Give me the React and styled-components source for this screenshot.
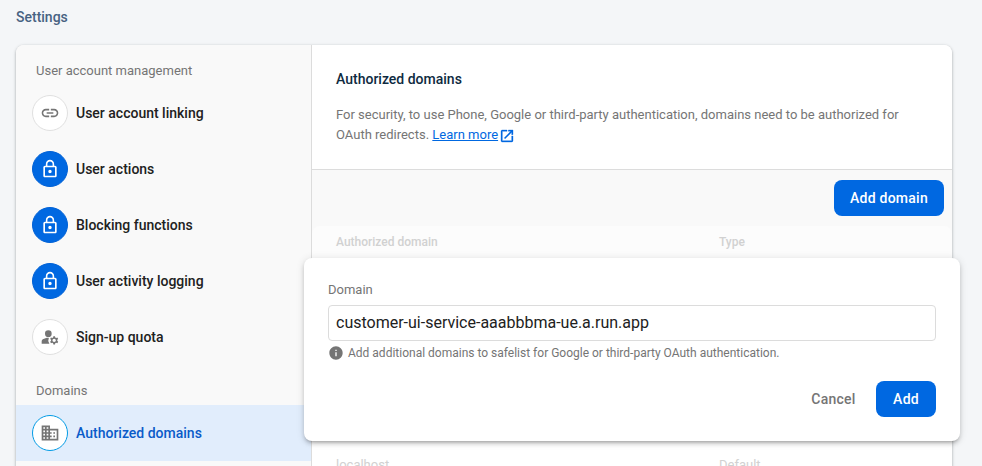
import React from 'react';
import styled, { createGlobalStyle, css } from 'styled-components';
import {
  MdLink,
  MdLockOutline,
  MdManageAccounts,
  MdDomain,
  MdOpenInNew,
  MdInfo,
} from 'react-icons/md';

const GlobalStyle = createGlobalStyle`
  * { box-sizing: border-box; }
  body {
    margin: 0;
    background: #f4f6f8;
    font-family: Roboto, sans-serif;
    overflow: hidden;
  }
`;

const Page = styled.div`
  position: relative;
  height: 466px;
  overflow: hidden;
  background: #f4f6f8;
`;

const PageTitle = styled.h1`
  margin: 0;
  padding: 7px 16px 0;
  height: 45px;
  font-size: 14px;
  line-height: 20px;
  font-weight: 500;
  color: #476282;
`;

const Card = styled.div`
  display: grid;
  grid-template-columns: 296px 1fr;
  width: 936px;
  height: 560px;
  margin-left: 16px;
  border-radius: 8px;
  overflow: hidden;
  background: #fff;
  box-shadow: 0 1px 2px rgba(60, 64, 67, 0.3), 0 1px 3px 1px rgba(60, 64, 67, 0.15);
`;

const Sidebar = styled.nav`
  background: #f9f9f9;
  border-right: 1px solid #dcdcdc;
`;

const SectionLabel = styled.div`
  height: 40px;
  padding: 16px 20px 0;
  font-size: 13px;
  line-height: 20px;
  color: #757575;
`;

const NavItem = styled.a`
  display: flex;
  align-items: center;
  gap: 8px;
  height: 56px;
  padding-left: 16px;
  font-size: 14px;
  font-weight: 500;
  color: ${(p) => (p.$active ? '#0a5bc9' : '#212121')};
  background: ${(p) => (p.$active ? '#e1edfc' : 'transparent')};
`;

const variants = {
  plain: css`
    background: #fff;
    color: #757575;
    border: 1px solid #e0e0e0;
  `,
  locked: css`
    background: #0068e1;
    color: #fff;
    border: 1px solid #0061d6;
  `,
  active: css`
    background: #fff;
    color: #757575;
    border: 1px solid #039be5;
  `,
};

const IconBadge = styled.span`
  display: flex;
  align-items: center;
  justify-content: center;
  width: 36px;
  height: 36px;
  border-radius: 50%;
  font-size: 20px;
  ${(p) => variants[p.$variant]}
`;

const Main = styled.main`
  display: flex;
  flex-direction: column;
  background: #fff;
`;

const Intro = styled.section`
  height: 125px;
  padding: 24px 24px 0;
  border-bottom: 1px solid #dcdcdc;
`;

const Heading = styled.h2`
  margin: 0 0 16px;
  font-size: 14px;
  line-height: 20px;
  font-weight: 500;
  color: #0e2a3f;
`;

const Description = styled.p`
  margin: 0;
  font-size: 13px;
  line-height: 20px;
  color: #757575;
`;

const LearnMore = styled.a`
  color: #0068e1;
  text-decoration: underline;

  svg {
    margin-left: 1px;
    font-size: 16px;
    vertical-align: -5px;
    stroke: currentColor;
    stroke-width: 0.5px;
  }

  svg path[fill='none'] {
    stroke: none;
  }
`;

const Toolbar = styled.div`
  display: flex;
  align-items: center;
  justify-content: flex-end;
  height: 56px;
  padding-right: 8px;
  background: #f9f9f9;
`;

const Button = styled.button`
  width: ${(p) => p.$width};
  height: 36px;
  padding: 0;
  border: 0;
  border-radius: 8px;
  font: 500 14px Roboto, sans-serif;
  letter-spacing: 0.25px;
  color: ${(p) => (p.$primary ? '#fff' : '#757575')};
  background: ${(p) => (p.$primary ? '#0068e1' : 'transparent')};
`;

const TableBackdrop = styled.div`
  background: #f9f9f9;
`;

const TableRow = styled.div`
  display: grid;
  grid-template-columns: 383px 1fr;
  align-items: center;
  height: 48px;
  padding-left: 24px;
  font-size: 13px;
  color: #d1d1d1;
  background: #fff;
`;

const TableHead = styled(TableRow)`
  height: 32px;
  font-size: 12px;
  font-weight: 500;
  color: #d1d1d1;
  background: #fcfcfc;
  border-radius: 8px 8px 0 0;
`;

const TableBody = styled.div`
  padding-top: 182px;
`;

const Dialog = styled.form`
  position: absolute;
  left: 304px;
  top: 258px;
  width: 656px;
  height: 183px;
  padding: 22px 24px 0;
  border-radius: 8px;
  background: #fff;
  box-shadow: 0 3px 3px -2px rgba(0, 0, 0, 0.2), 0 3px 4px rgba(0, 0, 0, 0.14),
    0 1px 8px rgba(0, 0, 0, 0.12);
`;

const FieldLabel = styled.label`
  display: block;
  height: 25px;
  font-size: 13px;
  line-height: 20px;
  color: #757575;
`;

const TextField = styled.input`
  display: block;
  width: 100%;
  height: 36px;
  padding: 0 7px 2px;
  border: 1px solid #dcdcdc;
  border-radius: 4px;
  outline: 0;
  font: 400 16px Roboto, sans-serif;
  color: #212121;
  background: #fff;
`;

const Hint = styled.div`
  display: flex;
  align-items: center;
  gap: 4px;
  height: 24px;
  font-size: 12px;
  color: #757575;

  svg {
    font-size: 16px;
  }
`;

const Actions = styled.div`
  display: flex;
  justify-content: flex-end;
  margin-top: 16px;
`;

const accountItems = [
  { label: 'User account linking', Icon: MdLink, variant: 'plain' },
  { label: 'User actions', Icon: MdLockOutline, variant: 'locked' },
  { label: 'Blocking functions', Icon: MdLockOutline, variant: 'locked' },
  { label: 'User activity logging', Icon: MdLockOutline, variant: 'locked' },
  { label: 'Sign-up quota', Icon: MdManageAccounts, variant: 'plain' },
];

function NavEntry({ label, Icon, variant }) {
  return (
    <NavItem $active={variant === 'active'}>
      <IconBadge $variant={variant}>
        <Icon />
      </IconBadge>
      {label}
    </NavItem>
  );
}

export default function App() {
  return (
    <Page>
      <GlobalStyle />
      <PageTitle>Settings</PageTitle>
      <Card>
        <Sidebar>
          <SectionLabel>User account management</SectionLabel>
          {accountItems.map((item) => (
            <NavEntry key={item.label} {...item} />
          ))}
          <SectionLabel>Domains</SectionLabel>
          <NavEntry label="Authorized domains" Icon={MdDomain} variant="active" />
        </Sidebar>
        <Main>
          <Intro>
            <Heading>Authorized domains</Heading>
            <Description>
              For security, to use Phone, Google or third-party authentication, domains need to be
              authorized for OAuth redirects.{' '}
              <LearnMore>
                Learn more
                <MdOpenInNew />
              </LearnMore>
            </Description>
          </Intro>
          <Toolbar>
            <Button $primary $width="110px">Add domain</Button>
          </Toolbar>
          <TableBackdrop>
            <TableHead>
              <span>Authorized domain</span>
              <span>Type</span>
            </TableHead>
          </TableBackdrop>
          <TableBody>
            <TableRow>
              <span>localhost</span>
              <span>Default</span>
            </TableRow>
          </TableBody>
        </Main>
      </Card>
      <Dialog>
        <FieldLabel htmlFor="domain">Domain</FieldLabel>
        <TextField id="domain" readOnly value="customer-ui-service-aaabbbma-ue.a.run.app" />
        <Hint>
          <MdInfo />
          Add additional domains to safelist for Google or third-party OAuth authentication.
        </Hint>
        <Actions>
          <Button type="button" $width="85px">Cancel</Button>
          <Button type="button" $primary $width="60px">Add</Button>
        </Actions>
      </Dialog>
    </Page>
  );
}
